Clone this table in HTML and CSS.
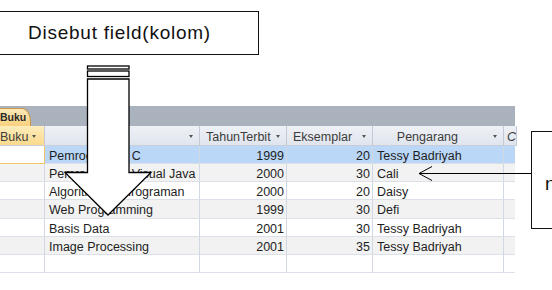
FILE: index.html
```html
<!DOCTYPE html>
<html>
<head>
<meta charset="utf-8">
<link rel="stylesheet" href="styles.css">
</head>
<body>
<div class="page">
  <div class="note-top"><span>Disebut field(kolom)</span></div>
  <div class="sheet">
    <div class="tabbar"><div class="tab">Buku</div></div>
    <div class="row head">
      <div class="cell hsel"><span>Buku</span><i class="dd"></i></div>
      <div class="cell hright"><i class="dd"></i></div>
      <div class="cell"><span>TahunTerbit</span><i class="dd"></i></div>
      <div class="cell"><span>Eksemplar</span><i class="dd"></i></div>
      <div class="cell hcenter"><span>Pengarang</span><i class="dd"></i></div>
      <div class="cell"><span class="cut">C</span></div>
    </div>
    <div class="row sel">
      <div class="cell active"></div>
      <div class="cell">Pemrograman C</div>
      <div class="cell num">1999</div>
      <div class="cell num">20</div>
      <div class="cell">Tessy Badriyah</div>
      <div class="cell"></div>
    </div>
    <div class="row alt">
      <div class="cell"></div>
      <div class="cell">Pemrograman Visual Java</div>
      <div class="cell num">2000</div>
      <div class="cell num">30</div>
      <div class="cell">Cali</div>
      <div class="cell"></div>
    </div>
    <div class="row">
      <div class="cell"></div>
      <div class="cell">Algoritma Pemrograman</div>
      <div class="cell num">2000</div>
      <div class="cell num">20</div>
      <div class="cell">Daisy</div>
      <div class="cell"></div>
    </div>
    <div class="row alt">
      <div class="cell"></div>
      <div class="cell">Web Programming</div>
      <div class="cell num">1999</div>
      <div class="cell num">30</div>
      <div class="cell">Defi</div>
      <div class="cell"></div>
    </div>
    <div class="row">
      <div class="cell"></div>
      <div class="cell">Basis Data</div>
      <div class="cell num">2001</div>
      <div class="cell num">30</div>
      <div class="cell">Tessy Badriyah</div>
      <div class="cell"></div>
    </div>
    <div class="row alt">
      <div class="cell"></div>
      <div class="cell">Image Processing</div>
      <div class="cell num">2001</div>
      <div class="cell num">35</div>
      <div class="cell">Tessy Badriyah</div>
      <div class="cell"></div>
    </div>
    <div class="row">
      <div class="cell"></div>
      <div class="cell"></div>
      <div class="cell"></div>
      <div class="cell"></div>
      <div class="cell"></div>
      <div class="cell"></div>
    </div>
  </div>
  <div class="note-right"><span>nama record</span></div>
  <svg class="overlay" width="552" height="290" viewBox="0 0 552 290">
    <rect x="87.5" y="66" width="41.5" height="3" fill="#fff" stroke="#000" stroke-width="1.3"/>
    <rect x="87.5" y="71" width="41.5" height="5.5" fill="#fff" stroke="#000" stroke-width="1.3"/>
    <polygon points="87.5,79 129,79 129,172.5 151,172.5 108,215 65,172.5 87.5,172.5" fill="#fff" stroke="#000" stroke-width="1.3" stroke-linejoin="miter"/>
    <line x1="531" y1="173.5" x2="419" y2="173.5" stroke="#000" stroke-width="1"/>
    <polyline points="432,166.5 419,173.5 432,180.5" fill="none" stroke="#000" stroke-width="1"/>
  </svg>
</div>
</body>
</html>
```

FILE: styles.css
```css
html, body {
  margin: 0;
  padding: 0;
  background: #fff;
}

.page {
  position: relative;
  width: 552px;
  height: 290px;
  overflow: hidden;
  background: #fff;
  font-family: "Liberation Sans", Arial, sans-serif;
}

.note-top {
  box-sizing: border-box;
  margin-top: 11px;
  margin-left: -20px;
  width: 279px;
  height: 44px;
  border: 1px solid #111;
  display: flex;
  align-items: center;
  justify-content: center;
  font-size: 19px;
  letter-spacing: 0.75px;
  color: #111;
}

.sheet {
  margin-top: 51px;
  width: 515px;
  font-size: 12.5px;
  color: #1e1e1e;
}

.tabbar {
  height: 20px;
  background: #aab2be;
  display: flex;
  align-items: flex-end;
}

.tab {
  box-sizing: border-box;
  width: 31px;
  height: 18px;
  background: linear-gradient(#fde9b8, #f9d07e);
  border: 1px solid #c99a4c;
  border-left: none;
  border-bottom: none;
  border-top-right-radius: 9px 14px;
  font-size: 10.5px;
  font-weight: bold;
  color: #2a2a2a;
  line-height: 17px;
}

.row {
  display: grid;
  grid-template-columns: 45px 155px 87px 86px 131px 11px;
  height: 18.15px;
}

.cell {
  box-sizing: border-box;
  border-right: 1px solid #d2d8e2;
  border-bottom: 1px solid #dce1e9;
  padding: 0 4px;
  line-height: 20px;
  white-space: nowrap;
  overflow: hidden;
}

.cell:last-child {
  border-right: none;
}

.head {
  height: 20px;
}

.head .cell {
  display: flex;
  align-items: center;
  justify-content: space-between;
  background: linear-gradient(#eef1f6, #e0e5ed);
  border-right: 1px solid #c3cad6;
  border-bottom: 1px solid #c8cfda;
  color: #3c3c3c;
  padding: 2px 6px 0 6px;
  line-height: 18px;
}

.head .hsel {
  background: linear-gradient(#fdedbd, #fbd98c);
  padding-left: 0;
  padding-right: 8px;
}

.head .hright {
  justify-content: flex-end;
}

.head .hcenter {
  justify-content: flex-end;
  gap: 35px;
}

.head .cut {
  font-style: italic;
  margin-left: -3px;
}

.dd {
  display: inline-block;
  width: 0;
  height: 0;
  border-left: 2.5px solid transparent;
  border-right: 2.5px solid transparent;
  border-top: 3px solid #555;
}

.num {
  text-align: right;
  padding-right: 2px;
}

.alt .cell {
  background: #f2f2f2;
}

.sel .cell {
  background: #bad7f7;
}

.sel .active {
  background: #fff;
  border-right: 1px solid #efc56a;
  border-bottom: 1px solid #efc56a;
}

.note-right {
  position: absolute;
  left: 531px;
  top: 131px;
  box-sizing: border-box;
  width: 160px;
  height: 98px;
  border: 1px solid #111;
  padding: 41px 0 0 13px;
  font-size: 19px;
  color: #111;
  white-space: nowrap;
}

.overlay {
  position: absolute;
  left: 0;
  top: 0;
  pointer-events: none;
}
```
